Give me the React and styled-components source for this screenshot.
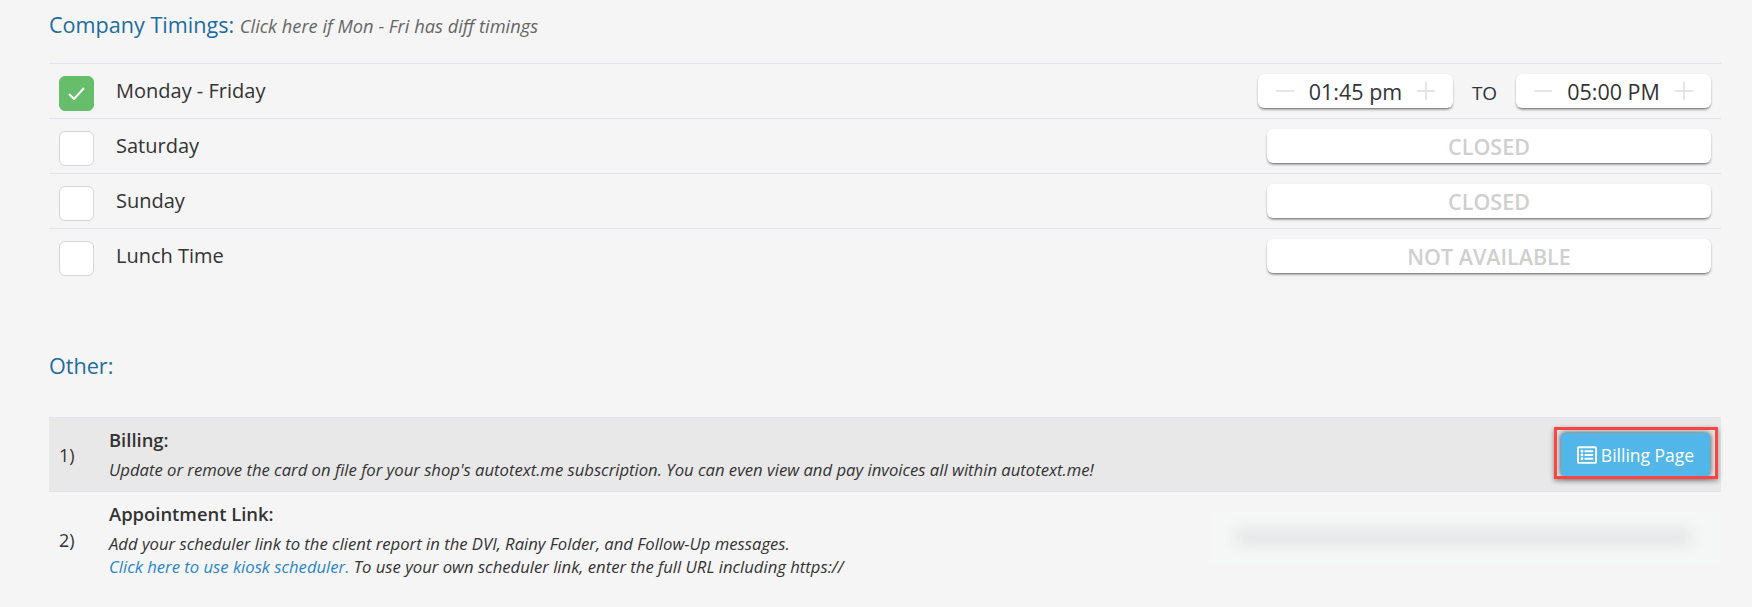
import React from 'react'
import styled, { createGlobalStyle } from 'styled-components'
import { FaRegListAlt } from 'react-icons/fa'

const Global = createGlobalStyle`
  *,
  *::before,
  *::after {
    margin: 0;
    padding: 0;
    box-sizing: border-box;
  }

  body {
    background: #f5f5f5;
    font-family: "Open Sans", sans-serif;
    color: #333;
  }
`

const Page = styled.div`
  height: 607px;
  padding: 11px 31px 0 49px;
  overflow: hidden;
`

const Heading = styled.h2`
  font-size: 21.6px;
  font-weight: 400;
  line-height: 28px;
  color: #1d6c9e;
`

const Hint = styled.em`
  font-size: 18.3px;
  color: #666;
`

const TimingList = styled.div`
  margin-top: 23px;
`

const TimingRow = styled.div`
  height: 55px;
  display: flex;
  align-items: center;
  border-top: 1px solid #e2e4ea;
  padding-right: 10px;
`

const CheckBox = styled.span`
  width: 35px;
  height: 35px;
  margin: 5px 0 0 10px;
  border-radius: 6px;
  display: flex;
  align-items: center;
  justify-content: center;
  border: 1px solid ${p => (p.$on ? '#66bd6a' : '#d4d4d4')};
  background: ${p => (p.$on ? '#66bd6a' : '#fff')};
`

const DayName = styled.span`
  margin-left: 22px;
  padding-bottom: 2px;
  font-size: 20px;
  color: #333;
  flex: 1;
`

const TimeBox = styled.div`
  width: 195px;
  height: 34px;
  display: flex;
  align-items: center;
  justify-content: space-between;
  padding: 0 18px;
  background: #fff;
  border-radius: 6px;
  box-shadow: 0 2px 3px -1px rgba(0, 0, 0, 0.65), 0 0 1px rgba(0, 0, 0, 0.08);
  font-size: 21.5px;
  color: #333;
`

const ToLabel = styled.span`
  width: 63px;
  text-align: center;
  font-size: 19px;
  padding-top: 4px;
`

const ClosedBox = styled.div`
  width: 444px;
  height: 34px;
  display: flex;
  align-items: center;
  justify-content: center;
  background: #fff;
  border-radius: 6px;
  box-shadow: 0 2px 3px -1px rgba(0, 0, 0, 0.65), 0 0 1px rgba(0, 0, 0, 0.08);
  font-size: 21.5px;
  font-weight: 600;
  color: #cfcfcf;
`

const OtherHeading = styled(Heading)`
  margin-top: 69px;
`

const OtherList = styled.div`
  margin-top: 37px;
`

const OtherRow = styled.div`
  display: flex;
  align-items: center;
  height: ${p => p.$h}px;
  background: ${p => (p.$shaded ? '#e8e8e8' : 'transparent')};
  border-top: ${p => (p.$shaded ? '1px solid #e2e4ea' : 'none')};
  border-bottom: ${p => (p.$shaded ? '1px solid #e2e4ea' : 'none')};
`

const RowNumber = styled.span`
  width: 60px;
  padding-left: 10px;
  font-size: 18px;
  flex: none;
`

const RowBody = styled.div`
  flex: 1;
`

const RowTitle = styled.div`
  font-size: 18.4px;
  font-weight: 600;
  line-height: 24px;
  margin-bottom: 6px;
  color: #333;
`

const RowText = styled.div`
  font-size: 16.67px;
  font-style: italic;
  line-height: 23px;
  color: #333;
`

const TextLink = styled.a`
  color: #2a85c9;
`

const ButtonWrap = styled.div`
  position: relative;
  margin-right: 11px;
`

const BillingButton = styled.button`
  width: 149px;
  height: 43px;
  display: flex;
  align-items: center;
  justify-content: center;
  gap: 4px;
  border: none;
  border-radius: 4px;
  background: #52b6e8;
  color: #fff;
  font-family: inherit;
  font-size: 17.5px;
  box-shadow: 0 0 6px rgba(0, 0, 0, 0.75);
`

const Annotation = styled.span`
  position: absolute;
  inset: -6px -8px -3px -7px;
  border: 3px solid #fb4444;
  box-shadow: 0 2px 5px rgba(0, 0, 0, 0.4);
`

const BlurPanel = styled.div`
  width: 510px;
  height: 52px;
  margin-bottom: 6px;
  padding: 0 30px 0 25px;
  display: flex;
  align-items: center;
  background: #f5f7f6;
  overflow: hidden;
`

const BlurredValue = styled.div`
  width: 100%;
  height: 16px;
  background: #e4e5e6;
  filter: blur(7px);
`

function Stepper({ value }) {
  return (
    <TimeBox>
      <svg width="18" height="18" viewBox="0 0 18 18"><path d="M0 9h18" stroke="#ddd" strokeWidth="1.5" /></svg>
      <span>{value}</span>
      <svg width="18" height="18" viewBox="0 0 18 18"><path d="M0 9h18M9 0v18" stroke="#ddd" strokeWidth="1.5" /></svg>
    </TimeBox>
  )
}

const days = [
  { name: 'Saturday', note: 'CLOSED' },
  { name: 'Sunday', note: 'CLOSED' },
  { name: 'Lunch Time', note: 'NOT AVAILABLE' },
]

export default function App() {
  return (
    <>
      <Global />
      <Page>
        <Heading>Company Timings: <Hint>Click here if Mon - Fri has diff timings</Hint></Heading>

        <TimingList>
          <TimingRow>
            <CheckBox $on>
              <svg width="17" height="13" viewBox="0 0 17 13" fill="none">
                <path d="M1 7l5 5L16 1" stroke="#fff" strokeWidth="2" />
              </svg>
            </CheckBox>
            <DayName>Monday - Friday</DayName>
            <Stepper value="01:45 pm" />
            <ToLabel>TO</ToLabel>
            <Stepper value="05:00 PM" />
          </TimingRow>
          {days.map(d => (
            <TimingRow key={d.name}>
              <CheckBox />
              <DayName>{d.name}</DayName>
              <ClosedBox>{d.note}</ClosedBox>
            </TimingRow>
          ))}
        </TimingList>

        <OtherHeading>Other:</OtherHeading>

        <OtherList>
          <OtherRow $shaded $h={75}>
            <RowNumber>1)</RowNumber>
            <RowBody>
              <RowTitle>Billing:</RowTitle>
              <RowText>Update or remove the card on file for your shop's autotext.me subscription. You can even view and pay invoices all within autotext.me!</RowText>
            </RowBody>
            <ButtonWrap>
              <BillingButton><FaRegListAlt size={20} /> Billing Page</BillingButton>
              <Annotation />
            </ButtonWrap>
          </OtherRow>
          <OtherRow $h={96}>
            <RowNumber>2)</RowNumber>
            <RowBody>
              <RowTitle>Appointment Link:</RowTitle>
              <RowText>
                Add your scheduler link to the client report in the DVI, Rainy Folder, and Follow-Up messages.<br />
                <TextLink>Click here to use kiosk scheduler.</TextLink> To use your own scheduler link, enter the full URL including https://
              </RowText>
            </RowBody>
            <BlurPanel><BlurredValue /></BlurPanel>
          </OtherRow>
        </OtherList>
      </Page>
    </>
  )
}
